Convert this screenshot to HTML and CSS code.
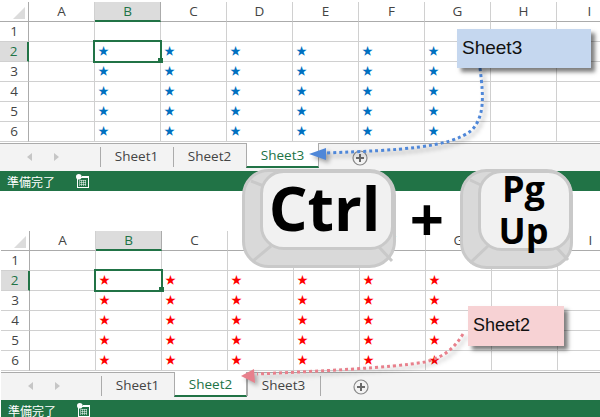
FILE: index.html
```html
<!DOCTYPE html>
<html lang="ja">
<head>
<meta charset="utf-8">
<title>Ctrl + PgUp</title>
<link rel="stylesheet" href="styles.css">
</head>
<body>
<div class="page">

<section class="sheet blue">
  <div class="grid">
    <div class="row head"><div class="corner"><i></i></div><div>A</div><div class="sel">B</div><div>C</div><div>D</div><div>E</div><div>F</div><div>G</div><div>H</div><div>I</div></div>
    <div class="row"><div class="num">1</div><div></div><div></div><div></div><div></div><div></div><div></div><div></div><div></div><div></div></div>
    <div class="row"><div class="num cur">2</div><div></div><div class="active">★<b></b></div><div>★</div><div>★</div><div>★</div><div>★</div><div>★</div><div></div><div></div></div>
    <div class="row"><div class="num">3</div><div></div><div>★</div><div>★</div><div>★</div><div>★</div><div>★</div><div>★</div><div></div><div></div></div>
    <div class="row"><div class="num">4</div><div></div><div>★</div><div>★</div><div>★</div><div>★</div><div>★</div><div>★</div><div></div><div></div></div>
    <div class="row"><div class="num">5</div><div></div><div>★</div><div>★</div><div>★</div><div>★</div><div>★</div><div>★</div><div></div><div></div></div>
    <div class="row"><div class="num">6</div><div></div><div>★</div><div>★</div><div>★</div><div>★</div><div>★</div><div>★</div><div></div><div></div></div>
  </div>
  <div class="tabs">
    <div class="nav"><span class="tri left"></span><span class="tri right"></span></div>
    <div class="tab">Sheet1</div>
    <div class="tab">Sheet2</div>
    <div class="tab on">Sheet3</div>
    <div class="add"><svg width="16" height="16" viewBox="0 0 16 16"><circle cx="8" cy="8" r="7" fill="none" stroke="#8a8a8a" stroke-width="1.2"/><path d="M8 4v8M4 8h8" stroke="#6a6a6a" stroke-width="2"/></svg></div>
  </div>
  <div class="status"><span>準備完了</span><svg class="macro" width="13" height="14" viewBox="0 0 13 14"><rect x="1.5" y="3.5" width="11" height="10" fill="none" stroke="#fff"/><path d="M3 7h8M3 9h8M3 11h8M5 6v6M7 6v6M9 6v6" stroke="#fff" stroke-dasharray="1 1"/><rect x="6" y="2" width="7" height="2" fill="#fff"/><circle cx="2.8" cy="2.8" r="2.8" fill="#fff"/></svg></div>
</section>

<section class="sheet red">
  <div class="grid">
    <div class="row head"><div class="corner"><i></i></div><div>A</div><div class="sel">B</div><div>C</div><div>D</div><div>E</div><div>F</div><div>G</div><div>H</div><div>I</div></div>
    <div class="row"><div class="num">1</div><div></div><div></div><div></div><div></div><div></div><div></div><div></div><div></div><div></div></div>
    <div class="row"><div class="num cur">2</div><div></div><div class="active">★<b></b></div><div>★</div><div>★</div><div>★</div><div>★</div><div>★</div><div></div><div></div></div>
    <div class="row"><div class="num">3</div><div></div><div>★</div><div>★</div><div>★</div><div>★</div><div>★</div><div>★</div><div></div><div></div></div>
    <div class="row"><div class="num">4</div><div></div><div>★</div><div>★</div><div>★</div><div>★</div><div>★</div><div>★</div><div></div><div></div></div>
    <div class="row"><div class="num">5</div><div></div><div>★</div><div>★</div><div>★</div><div>★</div><div>★</div><div>★</div><div></div><div></div></div>
    <div class="row"><div class="num">6</div><div></div><div>★</div><div>★</div><div>★</div><div>★</div><div>★</div><div>★</div><div></div><div></div></div>
  </div>
  <div class="tabs">
    <div class="nav"><span class="tri left"></span><span class="tri right"></span></div>
    <div class="tab">Sheet1</div>
    <div class="tab on">Sheet2</div>
    <div class="tab">Sheet3</div>
    <div class="add"><svg width="16" height="16" viewBox="0 0 16 16"><circle cx="8" cy="8" r="7" fill="none" stroke="#8a8a8a" stroke-width="1.2"/><path d="M8 4v8M4 8h8" stroke="#6a6a6a" stroke-width="2"/></svg></div>
  </div>
  <div class="status"><span>準備完了</span><svg class="macro" width="13" height="14" viewBox="0 0 13 14"><rect x="1.5" y="3.5" width="11" height="10" fill="none" stroke="#fff"/><path d="M3 7h8M3 9h8M3 11h8M5 6v6M7 6v6M9 6v6" stroke="#fff" stroke-dasharray="1 1"/><rect x="6" y="2" width="7" height="2" fill="#fff"/><circle cx="2.8" cy="2.8" r="2.8" fill="#fff"/></svg></div>
</section>

<svg class="arrows" width="600" height="417" viewBox="0 0 600 417">
  <g class="arrow-blue">
    <path class="dots" d="M480 68C484 100 484 116 472 130C450 148 400 150 327 153"/>
    <polygon points="309,154 326,148 326,160"/>
  </g>
  <g class="arrow-red">
    <path class="dots" d="M463 334C452 352 440 358 425 362C390 368 320 371 257 374"/>
    <polygon points="241,376 254,369 255,383"/>
  </g>
</svg>

<div class="note note-blue">Sheet3</div>
<div class="note note-red">Sheet2</div>

<div class="key key-ctrl">
  <svg width="154" height="99" viewBox="0 0 154 99">
    <rect class="cap" x="1.5" y="1.5" width="151" height="96" rx="25"/>
    <path class="edge" d="M9 12L24 18M11 92L29 77M137 78L150 92"/>
    <rect class="face" x="19.5" y="2.5" width="131" height="77" rx="22"/>
  </svg>
  <div class="label ctrl">Ctrl</div>
</div>
<div class="plus">+</div>
<div class="key key-pg">
  <svg width="113" height="100" viewBox="0 0 113 100">
    <rect class="cap" x="1.5" y="1.5" width="110" height="97" rx="25"/>
    <path class="edge" d="M10 11L23 17M10 94L28 77M97 79L108 91"/>
    <rect class="face" x="19.5" y="2.5" width="91" height="78" rx="22"/>
  </svg>
  <div class="label pg"><span>Pg</span><span>Up</span></div>
</div>

</div>
</body>
</html>
```

FILE: styles.css
```css
*, *::before, *::after { box-sizing: border-box; }
html, body { margin: 0; padding: 0; background: #fff; }
.page {
  position: relative;
  width: 600px;
  height: 417px;
  overflow: hidden;
  font-family: "Open Sans", "Noto Sans CJK JP", sans-serif;
}
.sheet { height: 229px; width: 600px; overflow: hidden; }
.sheet.red { padding-left: 1px; width: 601px; }
.grid { height: 143px; overflow: hidden; }

.row {
  display: grid;
  grid-template-columns: 29px repeat(9, 66px);
  height: 20px;
}
.row > div {
  position: relative;
  height: 20px;
  border-right: 1px solid #d0d0d0;
  border-bottom: 1px solid #d0d0d0;
  padding-left: 3px;
  font: 11px/17px "Noto Sans CJK JP", sans-serif;
}
.blue .row > div { color: #0070c0; }
.red .row > div { color: #ff0000; }

.blue .row > .num,
.red .row > .num {
  padding: 0;
  text-align: center;
  color: #444;
  background: #fff;
  border-right: 1px solid #ababab;
  font: 13.5px/19px "Open Sans", sans-serif;
}
.blue .row > .num.cur,
.red .row > .num.cur {
  background: #dcdcdc;
  color: #217346;
  border-right: 2px solid #217346;
}
.row.head { height: 22px; padding-top: 2px; }
.blue .row.head > div,
.red .row.head > div {
  padding: 0;
  text-align: center;
  color: #444;
  border-bottom: 1px solid #ababab;
  font: 13.5px/18px "Open Sans", sans-serif;
}
.blue .row.head > .sel,
.red .row.head > .sel {
  background: #dcdcdc;
  color: #217346;
  border-bottom: 2px solid #217346;
  border-right-color: #ababab;
}
.blue .row.head > .corner,
.red .row.head > .corner { border-right-color: #ababab; }
.corner i {
  display: block;
  width: 0;
  height: 0;
  margin: 5px 0 0 13px;
  border-left: 12px solid transparent;
  border-bottom: 12px solid #dcdcdc;
}
.row > .active::after {
  content: "";
  position: absolute;
  z-index: 1;
  left: -2px;
  top: -2px;
  width: 69px;
  height: 23px;
  border: 2px solid #217346;
}
.row > .active b {
  position: absolute;
  z-index: 2;
  right: -3px;
  bottom: -2px;
  width: 5px;
  height: 5px;
  background: #217346;
}

.tabs {
  display: flex;
  height: 28px;
  background: #f3f3f3;
  border-top: 1px solid #ababab;
  font-size: 13.5px;
  color: #444;
}
.nav {
  width: 100px;
  display: flex;
  gap: 22px;
  padding: 9px 0 0 27px;
}
.tri { width: 0; border-top: 4px solid transparent; border-bottom: 4px solid transparent; height: 8px; }
.tri.left { border-right: 5px solid #c6c6c6; }
.tri.right { border-left: 5px solid #c6c6c6; }
.tab {
  width: 73px;
  height: 23px;
  text-align: center;
  line-height: 24px;
  position: relative;
}
.tab:not(.on)::before {
  content: "";
  position: absolute;
  left: 0;
  top: 3px;
  height: 20px;
  border-left: 1px solid #ababab;
}
.tab:not(.on) + .add { position: relative; }
.tab:not(.on) + .add::before {
  content: "";
  position: absolute;
  left: 0;
  top: 3px;
  height: 20px;
  border-left: 1px solid #ababab;
}
.tab.on {
  margin-top: -1px;
  height: 25px;
  line-height: 25px;
  background: #fff;
  color: #217346;
  border-left: 1px solid #ababab;
  border-right: 1px solid #ababab;
  border-bottom: 2px solid #217346;
}
.add { padding: 6px 0 0 33px; line-height: 0; }

.status {
  height: 20px;
  background: #217346;
  color: #fff;
  display: flex;
  align-items: center;
  gap: 21px;
  padding-left: 7px;
  font: 12px/21px "Noto Sans CJK JP", sans-serif;
}
.macro { display: block; margin-top: -1px; }

.arrows { position: absolute; left: 0; top: 0; }
.dots { fill: none; stroke-width: 3; stroke-dasharray: 3 3; }
.arrow-blue { filter: drop-shadow(3px 3px 2px rgba(0,0,0,.35)); }
.arrow-blue .dots { stroke: #4f87d8; }
.arrow-blue polygon { fill: #4f87d8; }
.arrow-red { filter: drop-shadow(3px 3px 2px rgba(0,0,0,.3)); }
.arrow-red .dots { stroke: #e8808c; }
.arrow-red polygon { fill: #e8808c; }

.note {
  position: absolute;
  font-family: "Liberation Sans", sans-serif;
  color: #111;
  box-shadow: 4px 4px 4px rgba(0,0,0,.5);
}
.note-blue {
  left: 457px;
  top: 29px;
  width: 134px;
  height: 39px;
  background: #c5d7ef;
  font-size: 19px;
  line-height: 37px;
  padding-left: 5px;
}
.note-red {
  left: 468px;
  top: 306px;
  width: 96px;
  height: 40px;
  background: #f7d2d4;
  font-size: 18px;
  line-height: 38px;
  padding-left: 5px;
}

.key { position: absolute; }
.key svg { display: block; }
.key-ctrl { left: 242px; top: 169px; width: 154px; height: 99px; }
.key-pg { left: 460px; top: 169px; width: 113px; height: 100px; }
.cap { fill: #d9d9d9; stroke: #c9c9c9; stroke-width: 3; }
.edge { fill: none; stroke: #c9c9c9; stroke-width: 3; }
.face { fill: #f1f1f1; stroke: #c9c9c9; stroke-width: 3; }
.label {
  position: absolute;
  color: #000;
  font-family: "Open Sans", sans-serif;
  font-weight: 700;
  display: flex;
  flex-direction: column;
  align-items: center;
  justify-content: center;
  text-align: center;
}
.label.ctrl { left: 16px; top: 0; width: 133px; height: 78px; font-size: 61px; line-height: 78px; }
.label.pg { left: 17px; top: 2px; width: 93px; height: 78px; font-size: 36px; line-height: 42px; }
.plus {
  position: absolute;
  left: 400px;
  top: 180px;
  width: 54px;
  text-align: center;
  color: #000;
  font: 700 60px/78px "Open Sans", sans-serif;
}
```
